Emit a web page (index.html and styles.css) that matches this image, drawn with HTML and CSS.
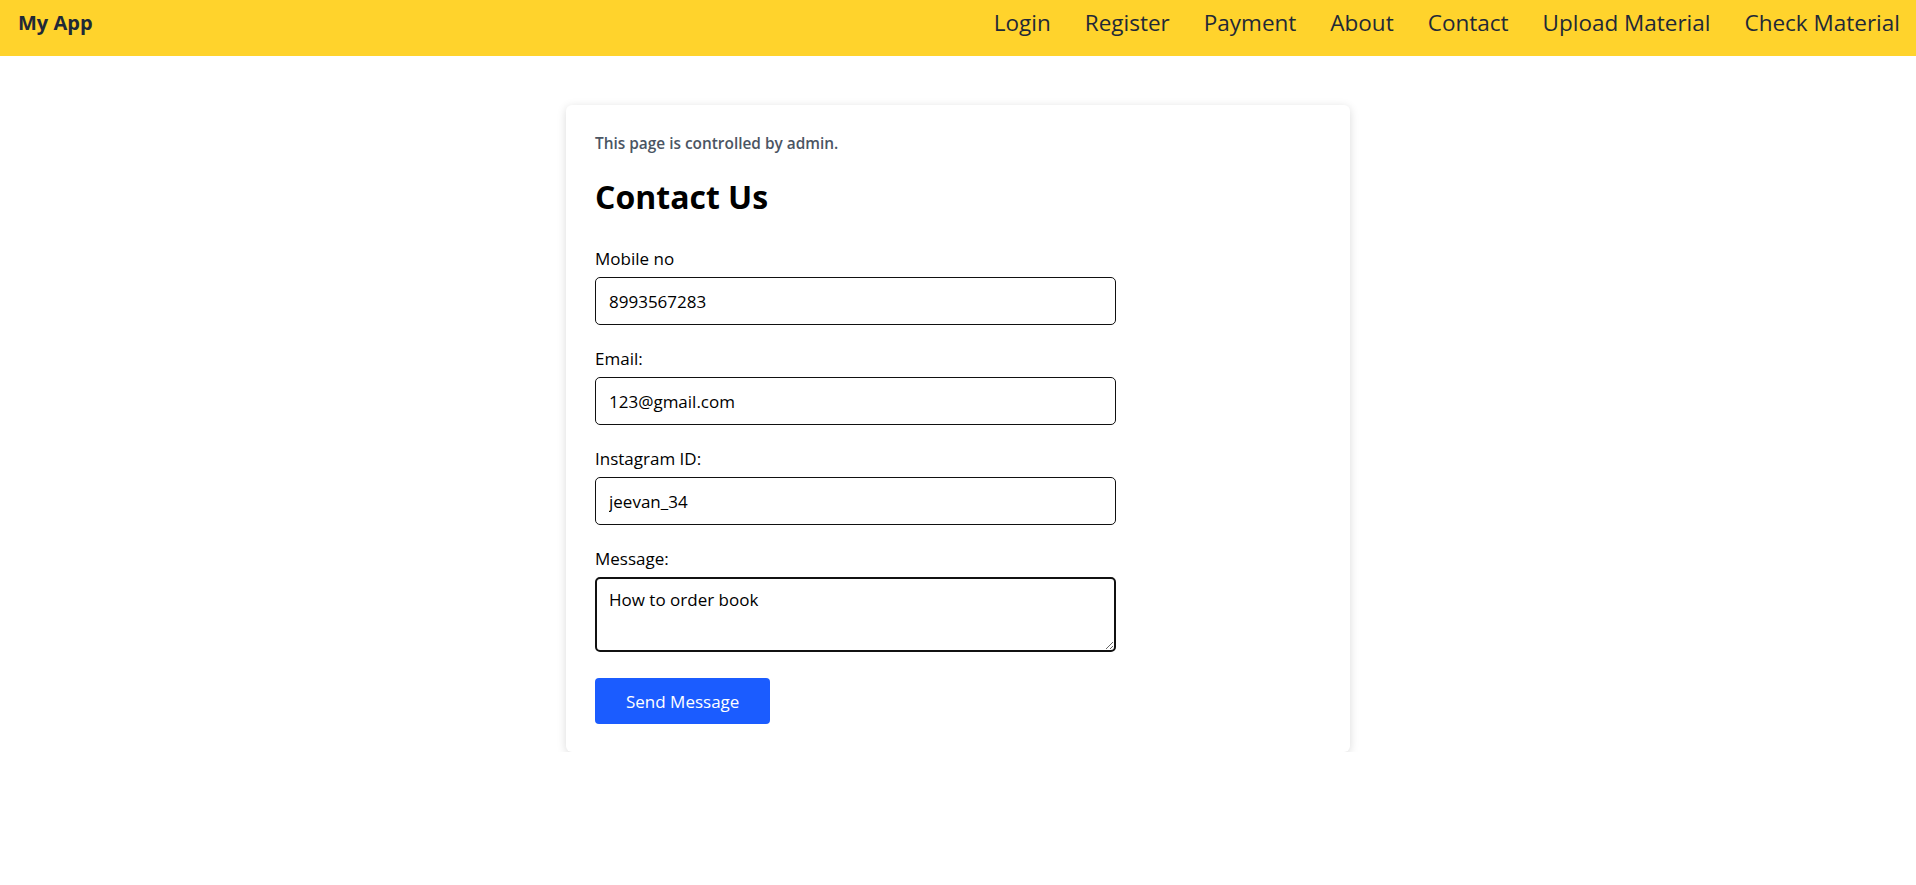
FILE: index.html
```html
<!DOCTYPE html>
<html lang="en">
<head>
<meta charset="utf-8">
<title>Contact Us - My App</title>
<link rel="stylesheet" href="styles.css">
</head>
<body>
<header class="navbar">
  <a class="brand" href="#">My App</a>
  <nav class="nav-links">
    <a href="#">Login</a>
    <a href="#">Register</a>
    <a href="#">Payment</a>
    <a href="#">About</a>
    <a href="#">Contact</a>
    <a href="#">Upload Material</a>
    <a href="#">Check Material</a>
  </nav>
</header>
<main class="page">
  <section class="card">
    <p class="note">This page is controlled by admin.</p>
    <h2 class="title">Contact Us</h2>
    <form class="contact-form">
      <div class="field">
        <label class="label" for="mobile">Mobile no</label>
        <input class="input" id="mobile" type="text" value="8993567283">
      </div>
      <div class="field">
        <label class="label" for="email">Email:</label>
        <input class="input" id="email" type="text" value="123@gmail.com">
      </div>
      <div class="field">
        <label class="label" for="insta">Instagram ID:</label>
        <input class="input" id="insta" type="text" value="jeevan_34">
      </div>
      <div class="field">
        <label class="label" for="msg">Message:</label>
        <textarea class="textarea" id="msg">How to order book</textarea>
      </div>
      <button class="btn" type="button">Send Message</button>
    </form>
  </section>
</main>
</body>
</html>
```

FILE: styles.css
```css
* { box-sizing: border-box; }

body {
  margin: 0;
  font-family: "Open Sans", "Noto Sans", sans-serif;
  background: #ffffff;
  color: #111111;
}

.navbar {
  height: 56px;
  background: #ffd32c;
  display: flex;
  align-items: center;
  justify-content: space-between;
  padding: 0 16px 10px 18px;
}

.brand {
  font-size: 20px;
  font-weight: 700;
  color: #1f2937;
  text-decoration: none;
  line-height: 24px;
}

.nav-links {
  display: flex;
  gap: 34px;
}

.nav-links a {
  font-size: 22.5px;
  font-weight: 500;
  color: #1f2937;
  text-decoration: none;
  line-height: 26px;
}

.page {
  display: flex;
  justify-content: center;
  padding-top: 49px;
}

.card {
  width: 784px;
  background: #fff;
  border-radius: 6px;
  box-shadow: 0 2px 10px rgba(0, 0, 0, 0.15);
  padding: 29px 29px 28px;
}

.note {
  margin: 0;
  font-size: 15.4px;
  line-height: 20px;
  font-weight: 600;
  color: #4b5563;
}

.title {
  margin: 23px 0 0;
  font-size: 32px;
  line-height: 40px;
  font-weight: 700;
  color: #000;
}

.contact-form {
  margin-top: 30px;
  display: flex;
  flex-direction: column;
  align-items: flex-start;
}

.field {
  display: flex;
  flex-direction: column;
  width: 521px;
  margin-bottom: 22px;
}

.label {
  font-size: 17px;
  line-height: 24px;
  margin-bottom: 6px;
  color: #000;
}

.input {
  height: 48px;
  width: 100%;
  border: 1px solid #111;
  border-radius: 5px;
  padding: 0 13px;
  font-family: inherit;
  font-size: 17px;
  color: #000;
  background: #fff;
}

.textarea {
  height: 75px;
  width: 100%;
  border: 2px solid #111;
  border-radius: 5px;
  padding: 9px 12px;
  font-family: inherit;
  font-size: 17px;
  line-height: 24px;
  color: #000;
  background: #fff;
}

.field:last-of-type { margin-bottom: 26px; }

.btn {
  height: 46px;
  padding: 0 31px;
  border: none;
  border-radius: 4px;
  background: #1b5cff;
  color: #fff;
  font-family: inherit;
  font-size: 17px;
  cursor: pointer;
}
```
